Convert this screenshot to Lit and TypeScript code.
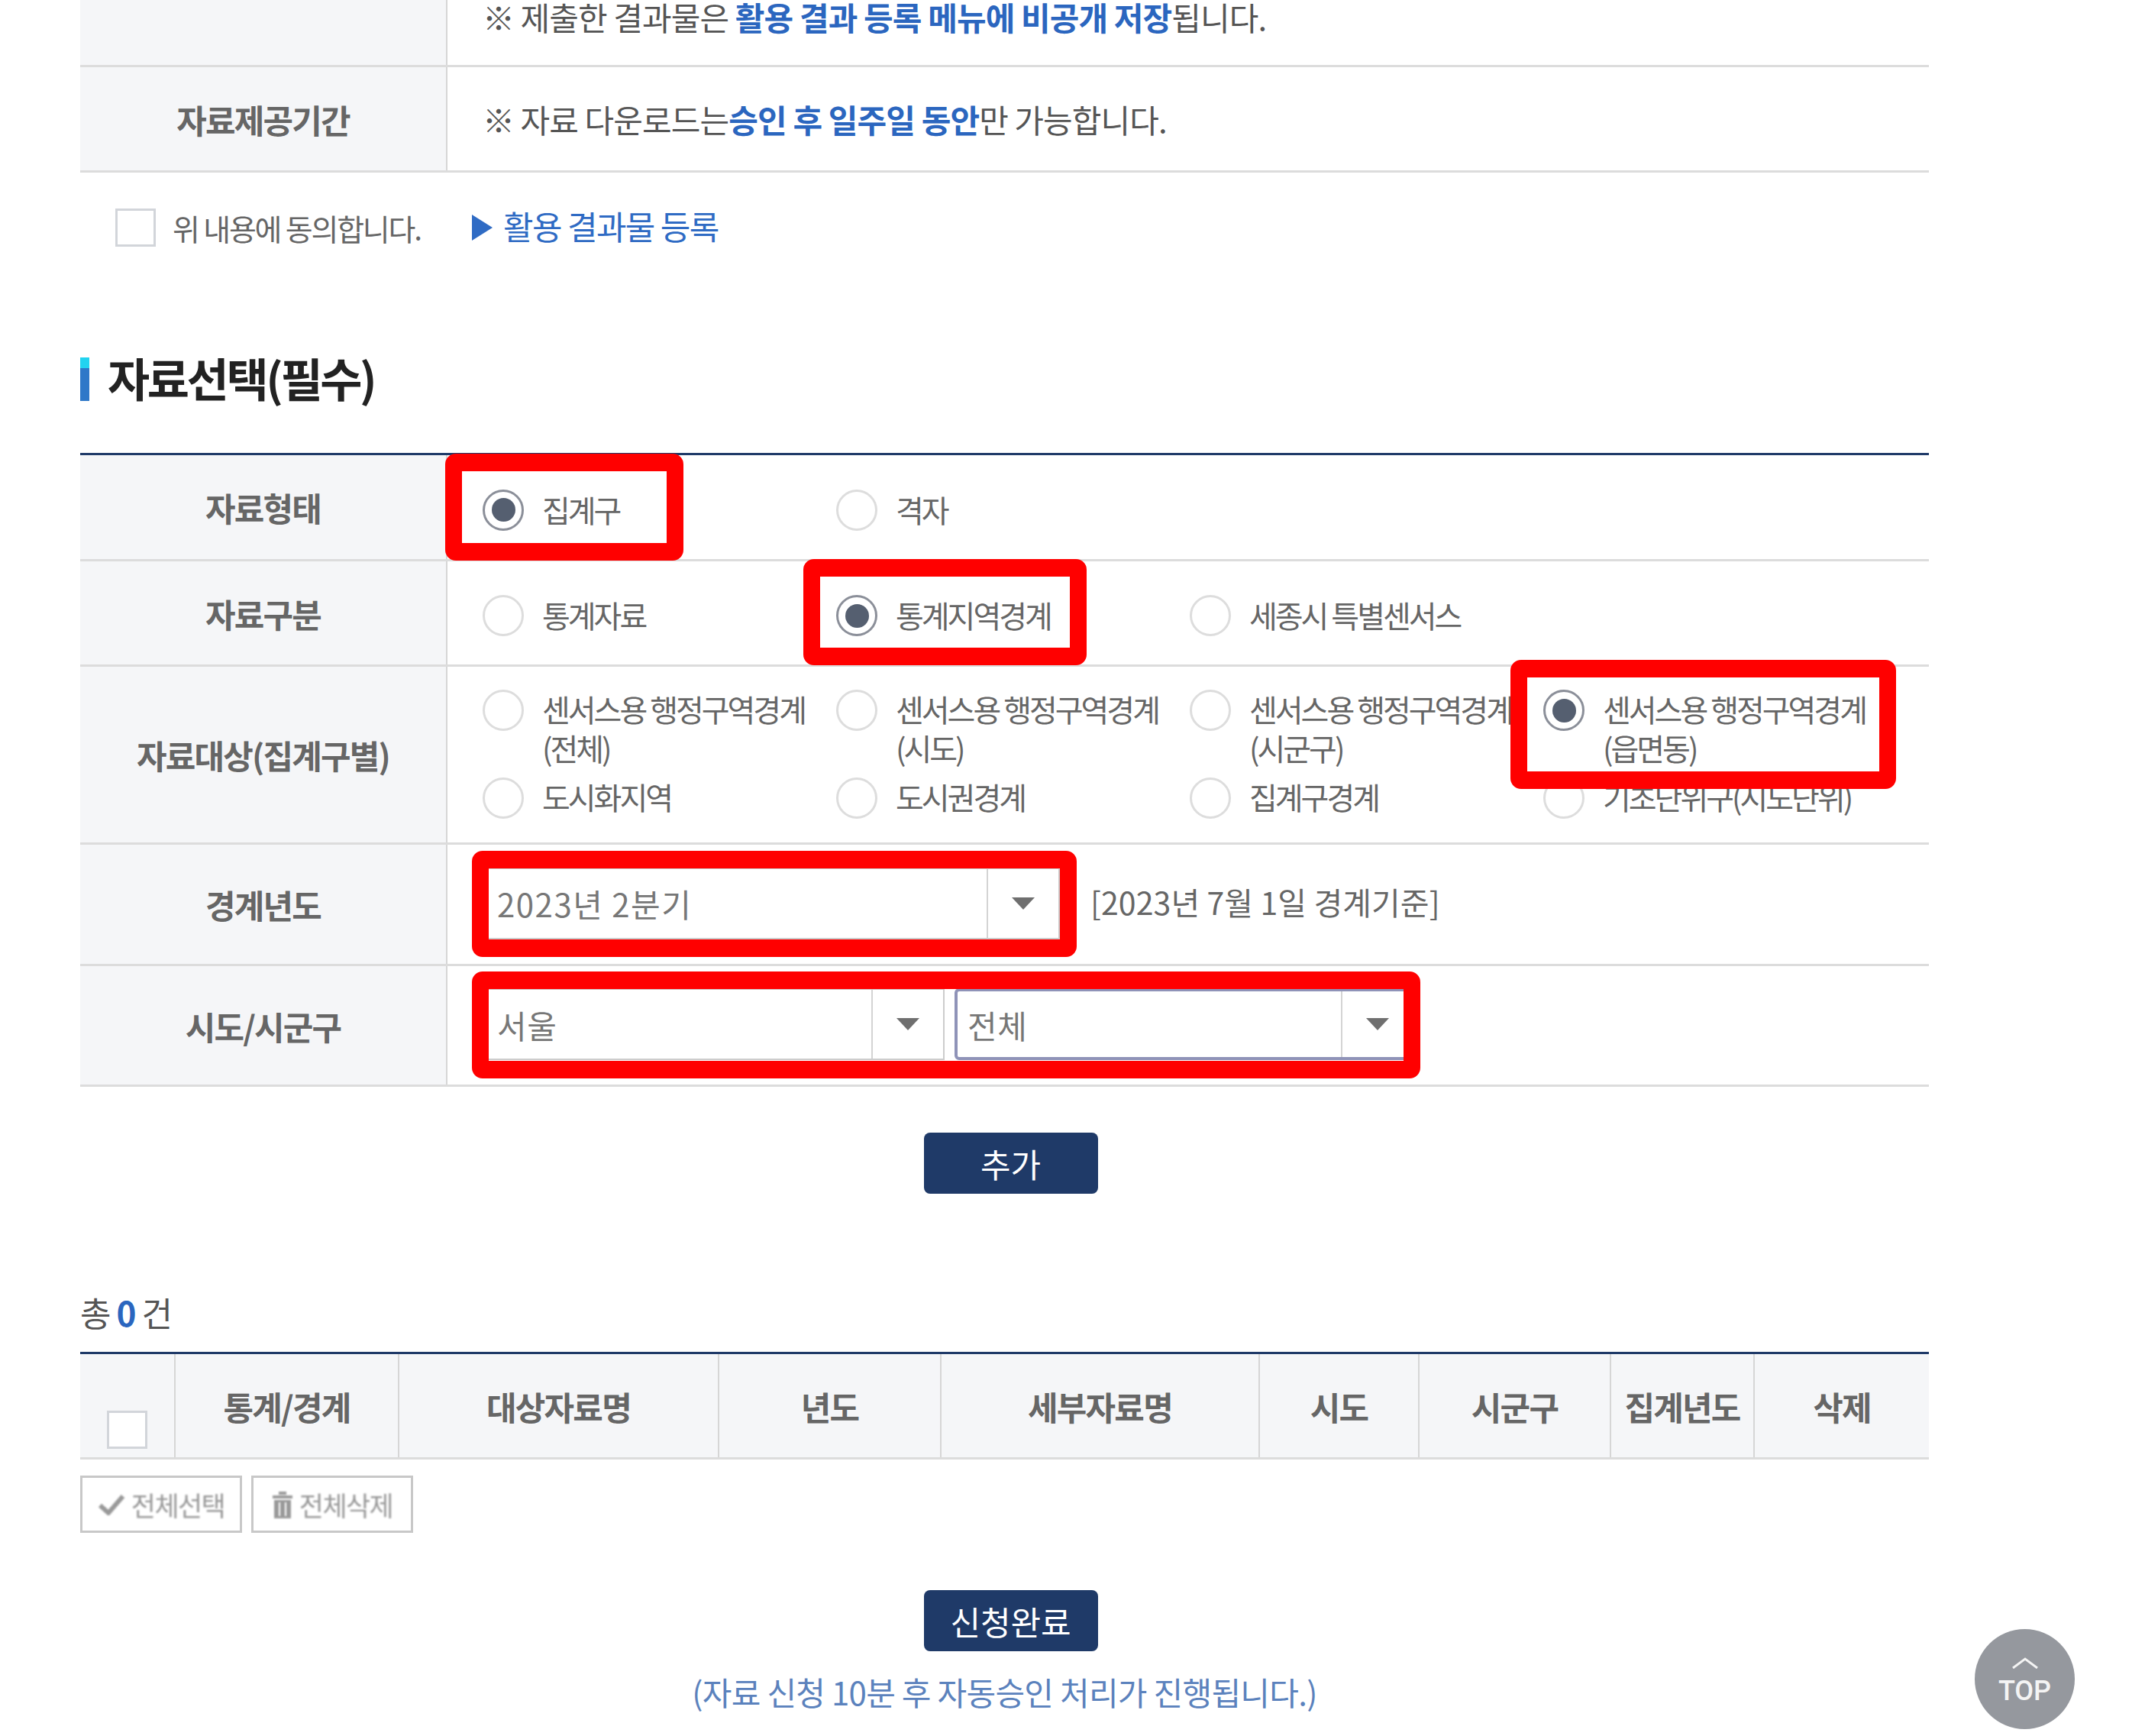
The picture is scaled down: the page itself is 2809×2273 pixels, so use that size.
import { LitElement, html, css } from "lit";
import { customElement } from "lit/decorators.js";

// red annotation boxes: left, top, width, height
const MARKS = [
  [583, 594, 312, 140],
  [1052, 732, 371, 139],
  [1978, 864, 505, 169],
  [618, 1114, 792, 139],
  [618, 1272, 1242, 140],
];

const COLS = [125, 293, 419, 291, 417, 209, 251, 188, 228];
const HEADS = ["통계/경계", "대상자료명", "년도", "세부자료명", "시도", "시군구", "집계년도", "삭제"];

@customElement("app-root")
export class AppRoot extends LitElement {
  static styles = css`
    :host {
      display: block;
      position: relative;
      height: 2273px;
      overflow: hidden;
      background: #fff;
      font-family: "Noto Sans CJK KR", "Noto Sans", sans-serif;
      color: #555;
    }
    .page {
      width: 2421px;
      margin-left: 105px;
    }
    .row {
      display: grid;
      grid-template-columns: 481px 1fr;
      border-bottom: 3px solid #dcdcdc;
      box-sizing: border-box;
    }
    .th {
      display: flex;
      align-items: center;
      justify-content: center;
      background: #f5f6f8;
      border-right: 2px solid #d6d6d6;
      color: #666;
      font-size: 43px;
      font-weight: 700;
      letter-spacing: -1.8px;
    }
    .td {
      display: flex;
      align-items: center;
      padding-left: 46px;
      font-size: 42px;
      letter-spacing: -0.9px;
      color: #555;
    }
    .td b {
      color: #2b66bf;
      font-weight: 700;
    }
    .r1 { height: 88px; }
    .r1 .td { align-items: flex-start; line-height: 44px; }
    .r2 { height: 138px; }
    .agree {
      display: flex;
      align-items: center;
      height: 50px;
      margin-top: 47px;
      padding-left: 46px;
    }
    .box {
      width: 53px;
      height: 50px;
      box-sizing: border-box;
      background: #fff;
      border: 3px solid #d2d5da;
    }
    .agree span {
      margin-left: 22px;
      width: 392px;
      font-size: 39px;
      letter-spacing: -2.2px;
      color: #666;
    }
    .agree i {
      width: 0;
      height: 0;
      border-left: 27px solid #2f6bc4;
      border-top: 17px solid transparent;
      border-bottom: 17px solid transparent;
    }
    .agree a {
      margin-left: 14px;
      margin-top: -7px;
      font-size: 43px;
      letter-spacing: -1.6px;
      color: #2f6bc4;
    }
    h2 {
      display: flex;
      align-items: center;
      margin: 145px 0 68px;
      height: 57px;
      font-size: 60px;
      font-weight: 700;
      letter-spacing: -3.4px;
      color: #222;
    }
    h2::before {
      content: "";
      width: 12px;
      height: 57px;
      margin-right: 24px;
      background: linear-gradient(#22d3f0 25%, #2f78c8 25%);
    }
    h2 span {
      margin-top: -6px;
    }
    .form {
      border-top: 3px solid #1f3a68;
    }
    .h-a { height: 139px; }
    .h-b { height: 138px; }
    .h-c { height: 233px; }
    .h-d { height: 159px; }
    .h-e { height: 158px; }
    .h-a .radios, .h-b .radios {
      margin-top: 7px;
    }
    .radios {
      display: grid;
      grid-template-columns: repeat(4, 463px);
      font-size: 40px;
      letter-spacing: -3px;
      color: #666;
      line-height: 52px;
    }
    .h-c .td {
      align-items: flex-start;
      padding-top: 30px;
    }
    .h-c .radios {
      line-height: 51px;
      row-gap: 13px;
    }
    .radio {
      display: flex;
      white-space: nowrap;
    }
    .dot {
      flex: none;
      width: 54px;
      height: 54px;
      margin-right: 24px;
      box-sizing: border-box;
      border: 3px solid #ddd;
      border-radius: 50%;
      background: #fff;
      display: flex;
      align-items: center;
      justify-content: center;
    }
    .radio.on .dot {
      border-color: #8b8f99;
    }
    .radio.on .dot::after {
      content: "";
      width: 31px;
      height: 31px;
      border-radius: 50%;
      background: #555f70;
    }
    .select {
      flex: none;
      display: flex;
      align-items: center;
      box-sizing: border-box;
      height: 94px;
      width: 755px;
      margin: -3px 0 0 1px;
      padding-left: 16px;
      border: 2px solid #ccc;
      background: #fff;
      color: #777;
      font-size: 42px;
      letter-spacing: 1.5px;
    }
    .select span {
      flex: 1;
    }
    .select i {
      flex: none;
      width: 92px;
      height: 100%;
      border-left: 2px solid #d4d4d4;
      display: flex;
      align-items: center;
      justify-content: center;
    }
    .select i::after {
      content: "";
      border-top: 16px solid #6f6f6f;
      border-left: 15px solid transparent;
      border-right: 15px solid transparent;
    }
    .half { width: 604px; letter-spacing: 0.5px; }
    .focus {
      margin-left: 13px;
      padding-left: 13px;
      border: 4px solid #8f93b8;
      border-radius: 6px;
    }
    .basis {
      margin-left: 40px;
      margin-top: -9px;
      font-size: 41px;
      letter-spacing: 0.1px;
      color: #666;
    }
    .center {
      display: flex;
      justify-content: center;
      padding-left: 16px;
    }
    .btn {
      width: 228px;
      height: 80px;
      box-sizing: border-box;
      display: flex;
      align-items: center;
      justify-content: center;
      background: #1f3a68;
      border-radius: 8px;
      color: #fff;
      font-size: 43px;
      letter-spacing: 0;
    }
    .add { margin-top: 60px; }
    .total {
      margin-top: 125px;
      height: 60px;
      line-height: 60px;
      font-size: 44px;
      letter-spacing: -1px;
      color: #555;
    }
    .total b {
      color: #2b66bf;
      margin: 0 8px;
    }
    .list {
      display: grid;
      height: 141px;
      margin-top: 22px;
      box-sizing: border-box;
      border-top: 3px solid #1f3a68;
      border-bottom: 3px solid #dcdcdc;
      background: #f5f6f8;
    }
    .list .th {
      background: none;
    }
    .list .th:last-child {
      border-right: none;
    }
    .list .check {
      align-items: flex-end;
      padding-bottom: 11px;
    }
    .tools {
      display: flex;
      gap: 12px;
      margin-top: 21px;
    }
    .tool {
      display: flex;
      align-items: center;
      justify-content: center;
      gap: 8px;
      width: 212px;
      height: 75px;
      box-sizing: border-box;
      border: 3px solid #c8c8c8;
      color: #999;
      font-size: 35px;
      letter-spacing: -1.6px;
    }
    .tool svg, .tool span {
      filter: blur(1px);
    }
    .submit { margin-top: 75px; }
    .note {
      margin-top: 25px;
      text-align: center;
      font-size: 42px;
      line-height: 56px;
      letter-spacing: -0.7px;
      color: #5b82bd;
    }
    .mark {
      position: absolute;
      box-sizing: border-box;
      border: solid #ff0000;
      border-width: 23px 22px;
      border-radius: 14px;
    }
    .top {
      position: absolute;
      left: 2586px;
      top: 2133px;
      width: 131px;
      height: 131px;
      border-radius: 50%;
      background: #95989e;
      color: #f4f4f4;
      display: flex;
      flex-direction: column;
      align-items: center;
      font-family: Roboto, sans-serif;
      font-weight: 500;
      font-size: 36px;
      line-height: 36px;
    }
    .top svg {
      margin-top: 36px;
      margin-bottom: 11px;
    }
  `;

  radio(label: unknown, on = false) {
    return html`<label class="radio ${on ? "on" : ""}"><span class="dot"></span><span>${label}</span></label>`;
  }

  select(text: string, cls = "") {
    return html`<div class="select ${cls}"><span>${text}</span><i></i></div>`;
  }

  render() {
    const columns = COLS.map((c) => `${c}px`).join(" ");
    return html`
      <div class="page">
        <div class="row r1">
          <div class="th"></div>
          <div class="td"><span>※ 제출한 결과물은 <b>활용 결과 등록 메뉴에 비공개 저장</b>됩니다.</span></div>
        </div>
        <div class="row r2">
          <div class="th">자료제공기간</div>
          <div class="td"><span>※ 자료 다운로드는<b>승인 후 일주일 동안</b>만 가능합니다.</span></div>
        </div>
        <div class="agree">
          <div class="box"></div>
          <span>위 내용에 동의합니다.</span>
          <i></i>
          <a>활용 결과물 등록</a>
        </div>

        <h2><span>자료선택(필수)</span></h2>

        <div class="form">
          <div class="row h-a">
            <div class="th">자료형태</div>
            <div class="td"><div class="radios">${this.radio("집계구", true)}${this.radio("격자")}</div></div>
          </div>
          <div class="row h-b">
            <div class="th">자료구분</div>
            <div class="td">
              <div class="radios">
                ${this.radio("통계자료")}${this.radio("통계지역경계", true)}${this.radio("세종시 특별센서스")}
              </div>
            </div>
          </div>
          <div class="row h-c">
            <div class="th">자료대상(집계구별)</div>
            <div class="td">
              <div class="radios">
                ${this.radio(html`센서스용 행정구역경계<br />(전체)`)}
                ${this.radio(html`센서스용 행정구역경계<br />(시도)`)}
                ${this.radio(html`센서스용 행정구역경계<br />(시군구)`)}
                ${this.radio(html`센서스용 행정구역경계<br />(읍면동)`, true)}
                ${this.radio("도시화지역")}${this.radio("도시권경계")}${this.radio("집계구경계")}${this.radio("기초단위구(시도단위)")}
              </div>
            </div>
          </div>
          <div class="row h-d">
            <div class="th">경계년도</div>
            <div class="td">
              ${this.select("2023년 2분기")}
              <span class="basis">[2023년 7월 1일 경계기준]</span>
            </div>
          </div>
          <div class="row h-e">
            <div class="th">시도/시군구</div>
            <div class="td">${this.select("서울", "half")}${this.select("전체", "half focus")}</div>
          </div>
        </div>

        <div class="center add"><div class="btn">추가</div></div>

        <div class="total">총<b>0</b>건</div>
        <div class="list" style="grid-template-columns: ${columns}">
          <div class="th check"><div class="box"></div></div>
          ${HEADS.map((h) => html`<div class="th">${h}</div>`)}
        </div>
        <div class="tools">
          <div class="tool">
            <svg width="36" height="28" viewBox="0 0 36 28"><path d="M3 15l11 10L33 3" fill="none" stroke="#999" stroke-width="6" /></svg>
            <span>전체선택</span>
          </div>
          <div class="tool">
            <svg width="28" height="36" viewBox="0 0 28 36">
              <path d="M1 6h26v4H1zM9 1h10v4H9zM3 12h22v24H3z" fill="#999" />
              <path d="M10 15v18M18 15v18" stroke="#fff" stroke-width="2" />
            </svg>
            <span>전체삭제</span>
          </div>
        </div>

        <div class="center submit"><div class="btn">신청완료</div></div>
        <div class="note">(자료 신청 10분 후 자동승인 처리가 진행됩니다.)</div>
      </div>

      ${MARKS.map(
        ([x, y, w, h]) => html`<div class="mark" style="left:${x}px;top:${y}px;width:${w}px;height:${h}px"></div>`
      )}

      <div class="top">
        <svg width="36" height="16" viewBox="0 0 36 16"><path d="M2 15L18 3l16 12" fill="none" stroke="#f4f4f4" stroke-width="3" /></svg>
        TOP
      </div>
    `;
  }
}
